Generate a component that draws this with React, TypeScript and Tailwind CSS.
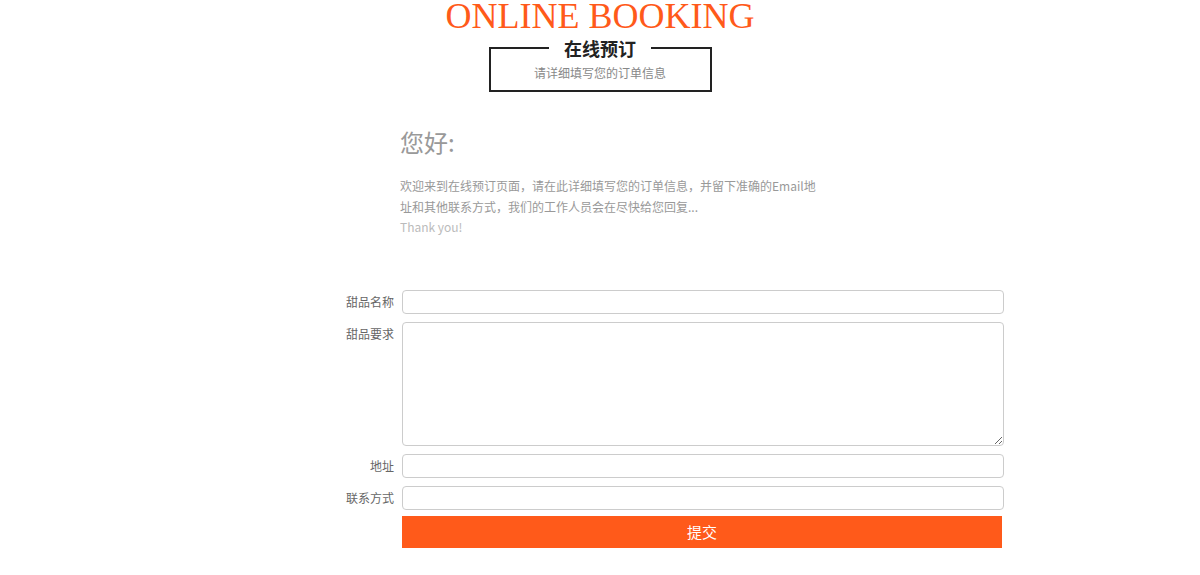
import React from "react";

const cjk = { fontFamily: "'Noto Sans CJK SC', 'Noto Sans', sans-serif" };

function Row({ label, children, top }: { label: string; children: React.ReactNode; top?: boolean }) {
  return (
    <div className="flex items-start">
      <div className="w-[394px] shrink-0 text-right text-[12px] leading-[24px] text-[#666]">{label}</div>
      <div className="ml-[8px]">{children}</div>
    </div>
  );
}

export default function App() {
  return (
    <div className="w-[1200px] h-[575px] overflow-hidden bg-white" style={cjk}>
      <h1
        className="text-center text-[36px] leading-[32px] text-[#ff5a1a]"
        style={{ fontFamily: "'Liberation Serif', 'Times New Roman', serif" }}
      >
        ONLINE BOOKING
      </h1>
      <div className="mx-auto mt-[15px] flex h-[45px] w-[223px] flex-col items-center border-2 border-[#222]">
        <div className="-mt-[11px] bg-white px-[15px] text-[18px] font-bold leading-[20px] text-[#222]">在线预订</div>
        <div className="mt-[7px] text-[12px] leading-[16px] text-[#888]">请详细填写您的订单信息</div>
      </div>

      <div className="ml-[400px] mt-[34px]">
        <div className="text-[24px] leading-[32px] text-[#999]">您好:</div>
        <p className="mt-[18px] w-[420px] text-[12px] leading-[20.5px] text-[#999]">
          欢迎来到在线预订页面，请在此详细填写您的订单信息，并留下准确的Email地址和其他联系方式，我们的工作人员会在尽快给您回复...
          <br />
          <span className="text-[#bbb]">Thank you!</span>
        </p>
      </div>

      <form className="mt-[52px] flex flex-col gap-[8px]" onSubmit={(e) => e.preventDefault()}>
        <Row label="甜品名称">
          <input className="block h-[24px] w-[602px] rounded-[4px] border border-[#ccc] bg-white px-2 text-[12px] outline-none" />
        </Row>
        <Row label="甜品要求">
          <textarea className="block h-[124px] w-[602px] rounded-[4px] border border-[#ccc] bg-white px-2 text-[12px] outline-none" />
        </Row>
        <Row label="地址">
          <input className="block h-[24px] w-[602px] rounded-[4px] border border-[#ccc] bg-white px-2 text-[12px] outline-none" />
        </Row>
        <Row label="联系方式">
          <input className="block h-[24px] w-[602px] rounded-[4px] border border-[#ccc] bg-white px-2 text-[12px] outline-none" />
        </Row>
        <div className="-mt-[2px] ml-[402px]">
          <button
            type="submit"
            className="block h-[32px] w-[600px] bg-[#ff5a1a] text-[15px] leading-[32px] text-white"
          >
            提交
          </button>
        </div>
      </form>
    </div>
  );
}
